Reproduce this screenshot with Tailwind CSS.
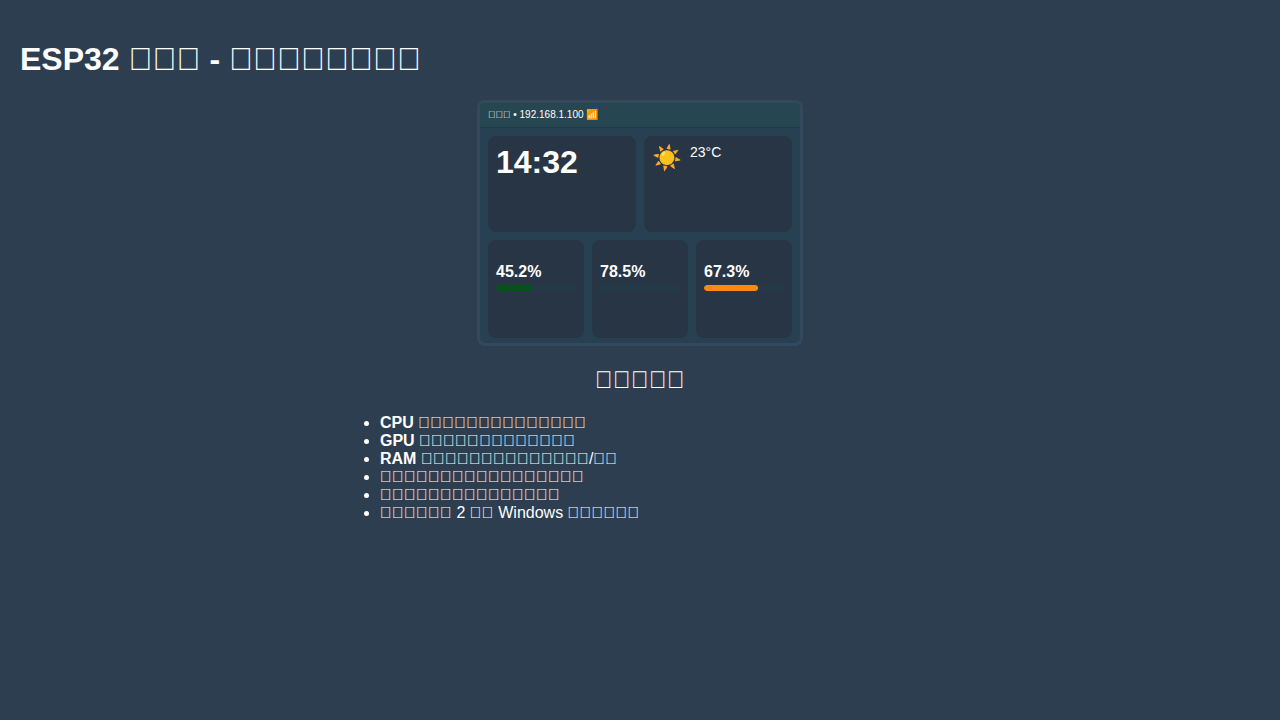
<!DOCTYPE html>
<html lang="zh">
<head>
<meta charset="utf-8">
<meta name="viewport" content="width=device-width, initial-scale=1">
<title>ESP32</title>
<script src="https://cdn.jsdelivr.net/npm/@tailwindcss/browser@4"></script>
</head>
<body class="min-h-screen bg-[#2c3e50] px-5 pt-[41px] pb-5 font-['Liberation_Sans',sans-serif] text-base leading-[18px] text-white">
<h1 class="mb-[23px] text-[32px] leading-9 font-bold">ESP32 &#xE83A;&#xE83A;&#xE83A; - &#xE83A;&#xE83A;&#xE83A;&#xE83A;&#xE83A;&#xE83A;&#xE83A;&#xE83A;</h1>

<main class="mx-auto max-w-[326px] overflow-hidden rounded-lg border-3 border-[#34495e] bg-[#284152] pb-[5px]">
  <header class="flex h-[25px] items-center border-b border-[#243a46] bg-[#264651] px-2 text-[10px] leading-3 text-white"><span>&#xE83A;&#xE83A;&#xE83A; • 192.168.1.100 📶</span></header>
  <div class="grid gap-2 px-2 pt-2">
    <div class="grid grid-cols-2 gap-2">
      <section class="h-24 rounded-lg bg-[#283544] p-2">
        <time class="block text-[32px] leading-9 font-bold">14:32</time>
      </section>
      <section class="flex h-24 items-start gap-2 rounded-lg bg-[#283544] p-2">
        <span class="text-2xl leading-7">☀️</span>
        <span class="text-sm leading-4 text-white">23°C</span>
      </section>
    </div>
    <div class="grid grid-cols-3 gap-2">
      <section class="h-[98px] rounded-lg bg-[#283544] px-2 pt-[23px]">
        <div class="font-bold">45.2%</div>
        <div class="mt-1 h-1.5 overflow-hidden rounded-full bg-[#253a47]"><div class="h-full rounded-full bg-[#045418]" style="width:45.2%"></div></div>
      </section>
      <section class="h-[98px] rounded-lg bg-[#283544] px-2 pt-[23px]">
        <div class="font-bold">78.5%</div>
        <div class="mt-1 h-1.5 rounded-full bg-[#253a47]"></div>
      </section>
      <section class="h-[98px] rounded-lg bg-[#283544] px-2 pt-[23px]">
        <div class="font-bold">67.3%</div>
        <div class="mt-1 h-1.5 overflow-hidden rounded-full bg-[#253a47]"><div class="h-full rounded-full bg-[#ff8810]" style="width:67.3%"></div></div>
      </section>
    </div>
  </div>
</main>

<section class="mx-auto mt-5 max-w-[600px]">
  <h2 class="mb-5 text-center text-2xl leading-7 font-bold">&#xE83A;&#xE83A;&#xE83A;&#xE83A;&#xE83A;</h2>
  <ul class="list-disc pl-10">
    <li><strong>CPU &#xE83A;&#xE83A;&#xE83A;&#xE83A;&#xE83A;</strong>&#xE83A;&#xE83A;&#xE83A;&#xE83A;&#xE83A;&#xE83A;&#xE83A;&#xE83A;&#xE83A;</li>
    <li><strong>GPU &#xE83A;&#xE83A;&#xE83A;&#xE83A;&#xE83A;</strong>&#xE83A;&#xE83A;&#xE83A;&#xE83A;&#xE83A;&#xE83A;&#xE83A;&#xE83A;</li>
    <li><strong>RAM &#xE83A;&#xE83A;&#xE83A;&#xE83A;&#xE83A;</strong>&#xE83A;&#xE83A;&#xE83A;&#xE83A;&#xE83A;&#xE83A;&#xE83A;&#xE83A;&#xE83A;/&#xE83A;&#xE83A;</li>
    <li>&#xE83A;&#xE83A;&#xE83A;&#xE83A;&#xE83A;&#xE83A;&#xE83A;&#xE83A;&#xE83A;&#xE83A;&#xE83A;&#xE83A;&#xE83A;&#xE83A;&#xE83A;&#xE83A;&#xE83A;</li>
    <li>&#xE83A;&#xE83A;&#xE83A;&#xE83A;&#xE83A;&#xE83A;&#xE83A;&#xE83A;&#xE83A;&#xE83A;&#xE83A;&#xE83A;&#xE83A;&#xE83A;&#xE83A;</li>
    <li>&#xE83A;&#xE83A;&#xE83A;&#xE83A;&#xE83A;&#xE83A; 2 &#xE83A;&#xE83A; Windows &#xE83A;&#xE83A;&#xE83A;&#xE83A;&#xE83A;&#xE83A;</li>
  </ul>
</section>
</body>
</html>
